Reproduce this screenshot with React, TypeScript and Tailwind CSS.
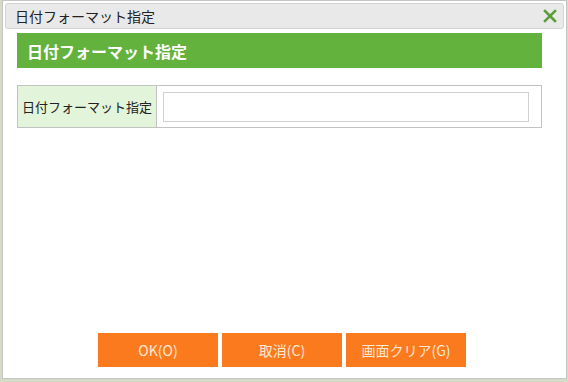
const FONT = { fontFamily: '"Noto Sans CJK JP", "Liberation Sans", sans-serif' };

function CloseIcon() {
  return (
    <svg width="14" height="14" viewBox="0 0 14 14">
      <path d="M2 2 L12 12 M12 2 L2 12" stroke="#5c9e3c" strokeWidth="2.6" strokeLinecap="square" />
    </svg>
  );
}

function OrangeButton({ label }: { label: string }) {
  return (
    <button className="flex h-[34px] w-[120px] items-center justify-center bg-[#fc7a1e] text-[14px] text-[#fde9d6]">
      {label}
    </button>
  );
}

export default function App() {
  return (
    <div className="h-[382px] w-[568px] bg-[#d4dcc8] pl-[2px] pb-[3px] pr-[1px]" style={FONT}>
      <div className="flex h-full flex-col border border-[#c5c5c5] bg-white p-[2px]">
        <div className="flex h-[26px] items-center justify-between rounded-[3px] border border-[#d3d3d3] bg-[#e9e9e9] pl-[9px] pr-[6px]">
          <span className="text-[14px] text-[#222]">日付フォーマット指定</span>
          <CloseIcon />
        </div>

        <div className="pl-[12px] pt-[4px]">
          <div className="flex h-[35px] w-[525px] items-center bg-[#62b23d] pl-[10px] text-[16px] font-bold text-white">
            日付フォーマット指定
          </div>

          <div className="mt-[17px] flex h-[43px] w-[525px] border border-[#c2c2c2]">
            <div className="flex w-[139px] items-center justify-center border-r border-[#c2c2c2] bg-[#e2f4da] text-[13px] text-[#222]">
              日付フォーマット指定
            </div>
            <div className="flex flex-1 items-center pl-[6px] pr-[12px]">
              <input className="h-[30px] w-full border border-[#d0d0d0] bg-white outline-none" />
            </div>
          </div>
        </div>

        <div className="mt-auto mb-[9px] flex gap-[4px] pl-[93px]">
          <OrangeButton label="OK(O)" />
          <OrangeButton label="取消(C)" />
          <OrangeButton label="画面クリア(G)" />
        </div>
      </div>
    </div>
  );
}
